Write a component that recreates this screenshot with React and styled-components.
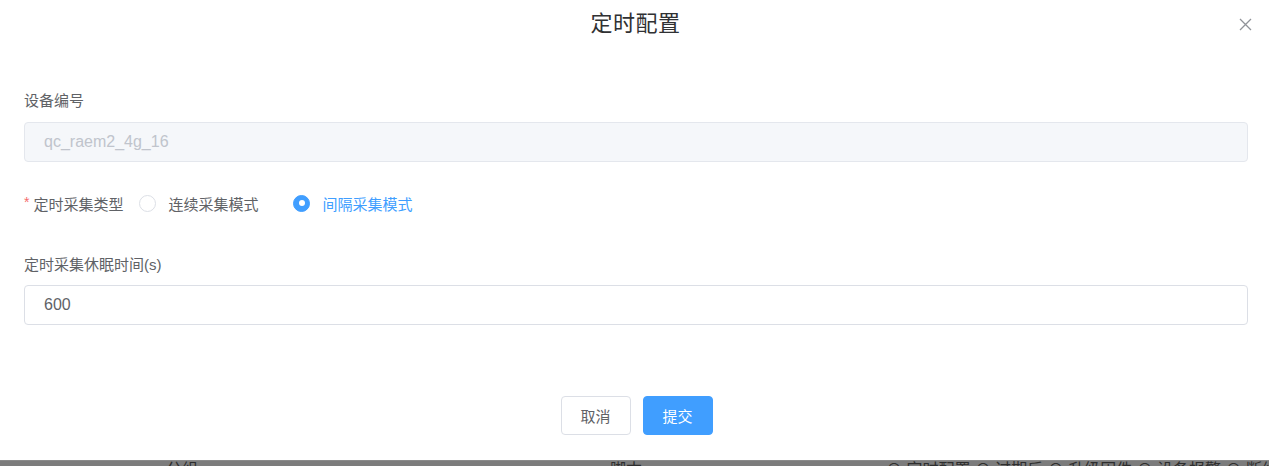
import React, { useState } from 'react';
import styled, { createGlobalStyle } from 'styled-components';

const GlobalStyle = createGlobalStyle`
  html, body {
    margin: 0;
    padding: 0;
    background: #7f7f7f;
  }
  body {
    font-family: "Helvetica Neue", Helvetica, "Liberation Sans", Arial, "Noto Sans CJK SC", sans-serif;
  }
`;

const Page = styled.div`
  width: 1269px;
  height: 466px;
  overflow: hidden;
  display: flex;
  flex-direction: column;
`;

const Dialog = styled.div`
  background: #fff;
  height: 460px;
  flex-shrink: 0;
  position: relative;
  display: flex;
  flex-direction: column;
`;

const Header = styled.div`
  height: 50px;
  display: flex;
  align-items: center;
  justify-content: center;
  position: relative;
`;

const Title = styled.span`
  font-size: 22px;
  color: #303133;
  line-height: 1;
  margin: -2px 0 0 2px;
  letter-spacing: 0.5px;
`;

const CloseBtn = styled.button`
  position: absolute;
  right: 16px;
  top: 16px;
  width: 16px;
  height: 16px;
  padding: 0;
  border: none;
  background: none;
  cursor: pointer;
  display: flex;
  align-items: center;
  justify-content: center;
`;

const Body = styled.div`
  padding: 40px 21px 0 24px;
`;

const Label = styled.div`
  font-size: 15px;
  line-height: 22px;
  color: #606266;
  margin-bottom: ${(p) => p.$gap || 10}px;
`;

const Input = styled.input`
  box-sizing: border-box;
  width: 100%;
  height: 40px;
  border: 1px solid ${(p) => (p.disabled ? '#e4e7ed' : '#dcdfe6')};
  border-radius: 4px;
  background: ${(p) => (p.disabled ? '#f5f7fa' : '#fff')};
  color: ${(p) => (p.disabled ? '#c0c4cc' : '#606266')};
  font-size: 16px;
  font-family: inherit;
  padding: 0 19px;
  outline: none;
  display: block;
`;

const RadioRow = styled.div`
  display: flex;
  align-items: center;
  height: 40px;
  margin: 21px 0 31px;
`;

const RowLabel = styled.span`
  font-size: 15px;
  color: #606266;
  margin-right: 16px;
  display: flex;
  align-items: center;
`;

const Star = styled.span`
  color: #f56c6c;
  margin-right: 4px;
  font-size: 14px;
  position: relative;
  top: -1px;
`;

const RadioItem = styled.label`
  display: flex;
  align-items: center;
  cursor: pointer;
  margin-right: 35px;
  font-size: 15px;
  color: ${(p) => (p.$checked ? '#409eff' : '#606266')};
`;

const Circle = styled.span`
  box-sizing: border-box;
  width: 17px;
  height: 17px;
  border-radius: 50%;
  border: 1px solid ${(p) => (p.$checked ? '#409eff' : '#dcdfe6')};
  background: ${(p) => (p.$checked ? '#409eff' : '#fff')};
  margin-right: 12px;
  display: flex;
  align-items: center;
  justify-content: center;
  &::after {
    content: '';
    width: 6px;
    height: 6px;
    border-radius: 50%;
    background: #fff;
    display: ${(p) => (p.$checked ? 'block' : 'none')};
  }
`;

const Footer = styled.div`
  display: flex;
  justify-content: center;
  gap: 12px;
  margin-top: 71px;
  padding-left: 4px;
`;

const Button = styled.button`
  box-sizing: border-box;
  width: 70px;
  height: 39px;
  border-radius: 4px;
  font-size: 15px;
  font-family: inherit;
  cursor: pointer;
  border: 1px solid ${(p) => (p.$primary ? '#409eff' : '#dcdfe6')};
  background: ${(p) => (p.$primary ? '#409eff' : '#fff')};
  color: ${(p) => (p.$primary ? '#fff' : '#606266')};
`;

const Backdrop = styled.div`
  flex: 1;
  background: #7c7c7c;
  overflow: hidden;
  position: relative;
  border-top: 1px solid #8a8a8a;
`;

const BackText = styled.div`
  display: flex;
  font-size: 16px;
  line-height: 16px;
  color: #2e2e2e;
  padding-top: 1px;
  white-space: nowrap;
`;

const BackCell = styled.span`
  width: ${(p) => p.$w}px;
  flex-shrink: 0;
`;

export default function App() {
  const [mode, setMode] = useState('interval');
  const [sleep, setSleep] = useState('600');

  return (
    <Page>
      <GlobalStyle />
      <Dialog>
        <Header>
          <Title>定时配置</Title>
          <CloseBtn aria-label="close">
            <svg width="13" height="13" viewBox="0 0 13 13">
              <path d="M1 1L12 12M12 1L1 12" stroke="#909399" strokeWidth="1.3" fill="none" />
            </svg>
          </CloseBtn>
        </Header>
        <Body>
          <Label>设备编号</Label>
          <Input disabled value="qc_raem2_4g_16" readOnly />
          <RadioRow>
            <RowLabel>
              <Star>*</Star>定时采集类型
            </RowLabel>
            <RadioItem $checked={mode === 'continuous'} onClick={() => setMode('continuous')}>
              <Circle $checked={mode === 'continuous'} />
              连续采集模式
            </RadioItem>
            <RadioItem $checked={mode === 'interval'} onClick={() => setMode('interval')}>
              <Circle $checked={mode === 'interval'} />
              间隔采集模式
            </RadioItem>
          </RadioRow>
          <Label $gap={9}>定时采集休眠时间(s)</Label>
          <Input value={sleep} onChange={(e) => setSleep(e.target.value)} />
        </Body>
        <Footer>
          <Button>取消</Button>
          <Button $primary>提交</Button>
        </Footer>
      </Dialog>
      <Backdrop>
        <BackText>
          <BackCell $w={166} />
          <BackCell $w={444}>分组:</BackCell>
          <BackCell $w={276}>脚本:</BackCell>
          <span>⊗ 定时配置 ⊙ 过期后 ⊙ 升级固件 ⊗ 设备报警 ⊗ 断线</span>
        </BackText>
      </Backdrop>
    </Page>
  );
}
